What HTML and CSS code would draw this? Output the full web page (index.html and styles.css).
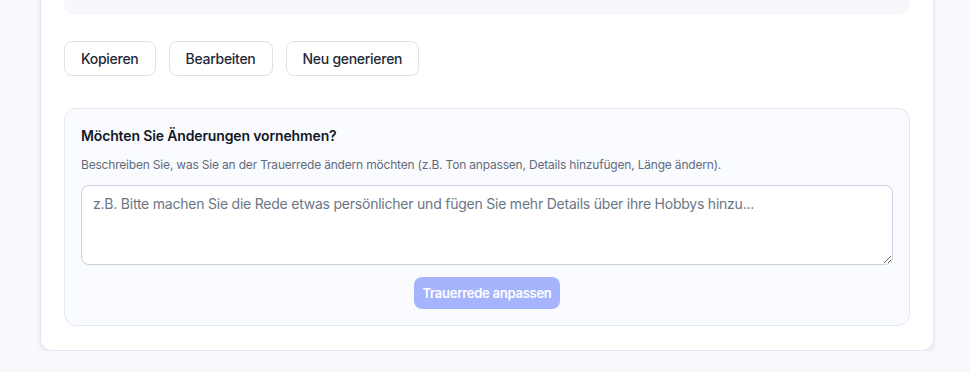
FILE: index.html
```html
<!DOCTYPE html>
<html lang="de">
<head>
<meta charset="utf-8">
<title>Trauerrede</title>
<link rel="stylesheet" href="styles.css">
</head>
<body>
<div class="page">
  <div class="card">
    <div class="speech"></div>
    <div class="actions">
      <button class="btn">Kopieren</button>
      <button class="btn">Bearbeiten</button>
      <button class="btn">Neu generieren</button>
    </div>
    <div class="feedback">
      <h3 class="fb-title">Möchten Sie Änderungen vornehmen?</h3>
      <p class="fb-desc">Beschreiben Sie, was Sie an der Trauerrede ändern möchten (z.B. Ton anpassen, Details hinzufügen, Länge ändern).</p>
      <textarea class="fb-input" placeholder="z.B. Bitte machen Sie die Rede etwas persönlicher und fügen Sie mehr Details über ihre Hobbys hinzu..."></textarea>
      <div class="fb-submit-row">
        <button class="btn-primary" disabled>Trauerrede anpassen</button>
      </div>
    </div>
  </div>
</div>
</body>
</html>
```

FILE: styles.css
```css
* { box-sizing: border-box; }
html, body {
  margin: 0;
  padding: 0;
  background: #f8f8fd;
  font-family: Inter, "Noto Sans", sans-serif;
  color: #1f2937;
}
.page {
  margin-top: -100px;
  padding: 0 36px 0 40px;
}
.card {
  width: 894px;
  background: #ffffff;
  border: 1px solid #e3e8f2;
  border-top: none;
  border-radius: 0 0 12px 12px;
  box-shadow: 0 2px 4px rgba(30, 41, 80, 0.1);
  padding: 0 23px 24px 23px;
}
.speech {
  height: 115px;
  background: #f7f8fb;
  border-radius: 0 0 12px 12px;
}
.actions {
  display: flex;
  gap: 13px;
  margin-top: 26px;
}
.btn {
  font-family: Inter, "Noto Sans", sans-serif;
  font-size: 14px;
  line-height: 19px;
  font-weight: 500;
  letter-spacing: -0.02em;
  color: #1f2937;
  background: #ffffff;
  border: 1px solid #dfe2e8;
  border-radius: 8px;
  padding: 7px 16px;
}
.feedback {
  margin-top: 32px;
  background: #fafbfe;
  border: 1px solid #e2e8f0;
  border-radius: 12px;
  padding: 17px 16px 16px 16px;
}
.fb-title {
  margin: 0;
  font-size: 14px;
  line-height: 20px;
  font-weight: 600;
  letter-spacing: -0.01em;
  color: #111827;
}
.fb-desc {
  margin: 11px 0 12px;
  font-size: 12px;
  line-height: 16px;
  letter-spacing: -0.016em;
  color: #5f6b7c;
}
.fb-input {
  display: block;
  width: 100%;
  height: 80px;
  font-family: Inter, "Noto Sans", sans-serif;
  font-size: 14px;
  line-height: 20px;
  letter-spacing: -0.016em;
  padding: 8px 11px;
  border: 1px solid #c9d0db;
  border-radius: 8px;
  background: #ffffff;
  color: #1f2937;
}
.fb-input::placeholder {
  color: #6b7685;
}
.fb-submit-row {
  display: flex;
  justify-content: center;
  margin-top: 12px;
}
.btn-primary {
  font-family: Inter, "Noto Sans", sans-serif;
  font-size: 13px;
  line-height: 16px;
  font-weight: 600;
  letter-spacing: -0.02em;
  color: #ffffff;
  background: #a5b4fc;
  border: none;
  border-radius: 8px;
  height: 32px;
  padding: 0 8px;
}
```
